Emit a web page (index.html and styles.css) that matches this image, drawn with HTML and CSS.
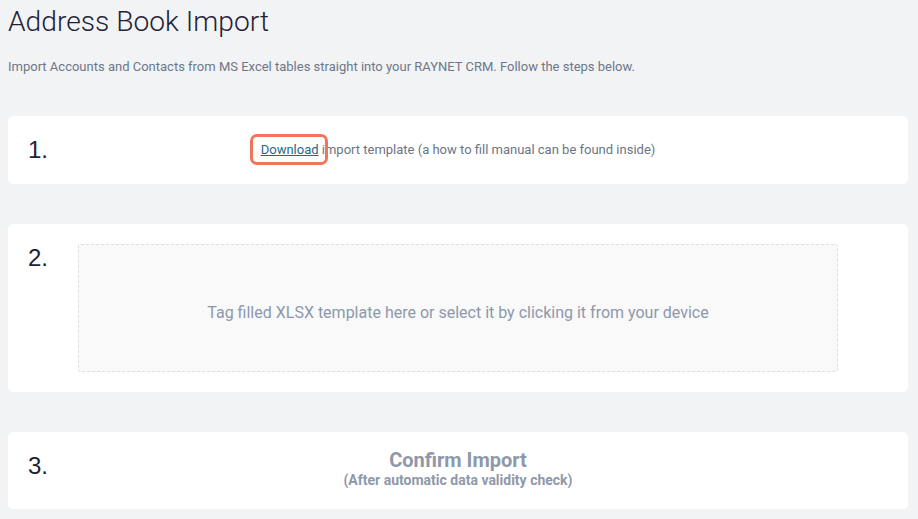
FILE: index.html
```html
<!DOCTYPE html>
<html lang="en">
<head>
<meta charset="utf-8">
<title>Address Book Import</title>
<link rel="stylesheet" href="styles.css">
</head>
<body>
<main class="page">
  <h1 class="title">Address Book Import</h1>
  <p class="lead">Import Accounts and Contacts from MS Excel tables straight into your RAYNET CRM. Follow the steps below.</p>

  <section class="card card-1">
    <div class="num">1.</div>
    <div class="body">
      <p class="step-text"><a class="dl" href="#">Download</a> import template (a how to fill manual can be found inside)</p>
    </div>
  </section>

  <section class="card card-2">
    <div class="num">2.</div>
    <div class="drop">Tag filled XLSX template here or select it by clicking it from your device</div>
  </section>

  <section class="card card-3">
    <div class="num">3.</div>
    <div class="body confirm">
      <div class="confirm-title">Confirm Import</div>
      <div class="confirm-sub">(After automatic data validity check)</div>
    </div>
  </section>
</main>
</body>
</html>
```

FILE: styles.css
```css
html, body {
  margin: 0;
  padding: 0;
  background: #f2f3f5;
}
body {
  font-family: Roboto, "Noto Sans", "Liberation Sans", sans-serif;
  color: #1f2235;
}
.page {
  padding: 0 10px 0 8px;
}
.title {
  margin: 0;
  padding-top: 4px;
  font-size: 28.2px;
  font-weight: 300;
  line-height: 36px;
  color: #1f2235;
}
.lead {
  margin: 19px 0 0;
  font-size: 13px;
  line-height: 16px;
  color: #6d7789;
}
.card {
  background: #fff;
  border-radius: 5px;
  display: grid;
  grid-template-columns: 70px 1fr 70px;
  margin-bottom: 40px;
}
.card-1 {
  margin-top: 41px;
  height: 68px;
}
.card-2 {
  padding: 20px 0;
}
.card-3 {
  height: 77px;
  margin-bottom: 0;
}
.num {
  grid-column: 1;
  padding: 20px 0 0 20px;
  font-family: "Liberation Sans", Arial, sans-serif;
  font-size: 24px;
  line-height: 28px;
  color: #1f2235;
}
.card-2 .num {
  padding-top: 0;
}
.body {
  grid-column: 2;
  align-self: center;
  text-align: center;
}
.step-text {
  margin: 0;
  font-size: 13px;
  line-height: 18px;
  color: #6b7586;
}
.dl {
  position: relative;
  color: #1b6b8c;
  text-decoration: underline;
}
.dl::after {
  content: "";
  position: absolute;
  left: -11px;
  right: -9px;
  top: -8px;
  bottom: -8px;
  border: 3px solid #f0735a;
  border-radius: 7px;
}
.drop {
  grid-column: 2;
  height: 116px;
  box-sizing: content-box;
  padding-top: 10px;
  border: 1px dashed #dcdee2;
  border-radius: 3px;
  background: #f9f9fa;
  display: flex;
  align-items: center;
  justify-content: center;
  font-size: 16px;
  line-height: 20px;
  color: #8d98ab;
}
.confirm {
  margin-top: -3px;
}
.confirm-title {
  font-size: 20px;
  font-weight: 700;
  line-height: 22px;
  color: #8f98a9;
}
.confirm-sub {
  font-size: 14px;
  font-weight: 700;
  line-height: 18px;
  color: #8f98a9;
}
```
